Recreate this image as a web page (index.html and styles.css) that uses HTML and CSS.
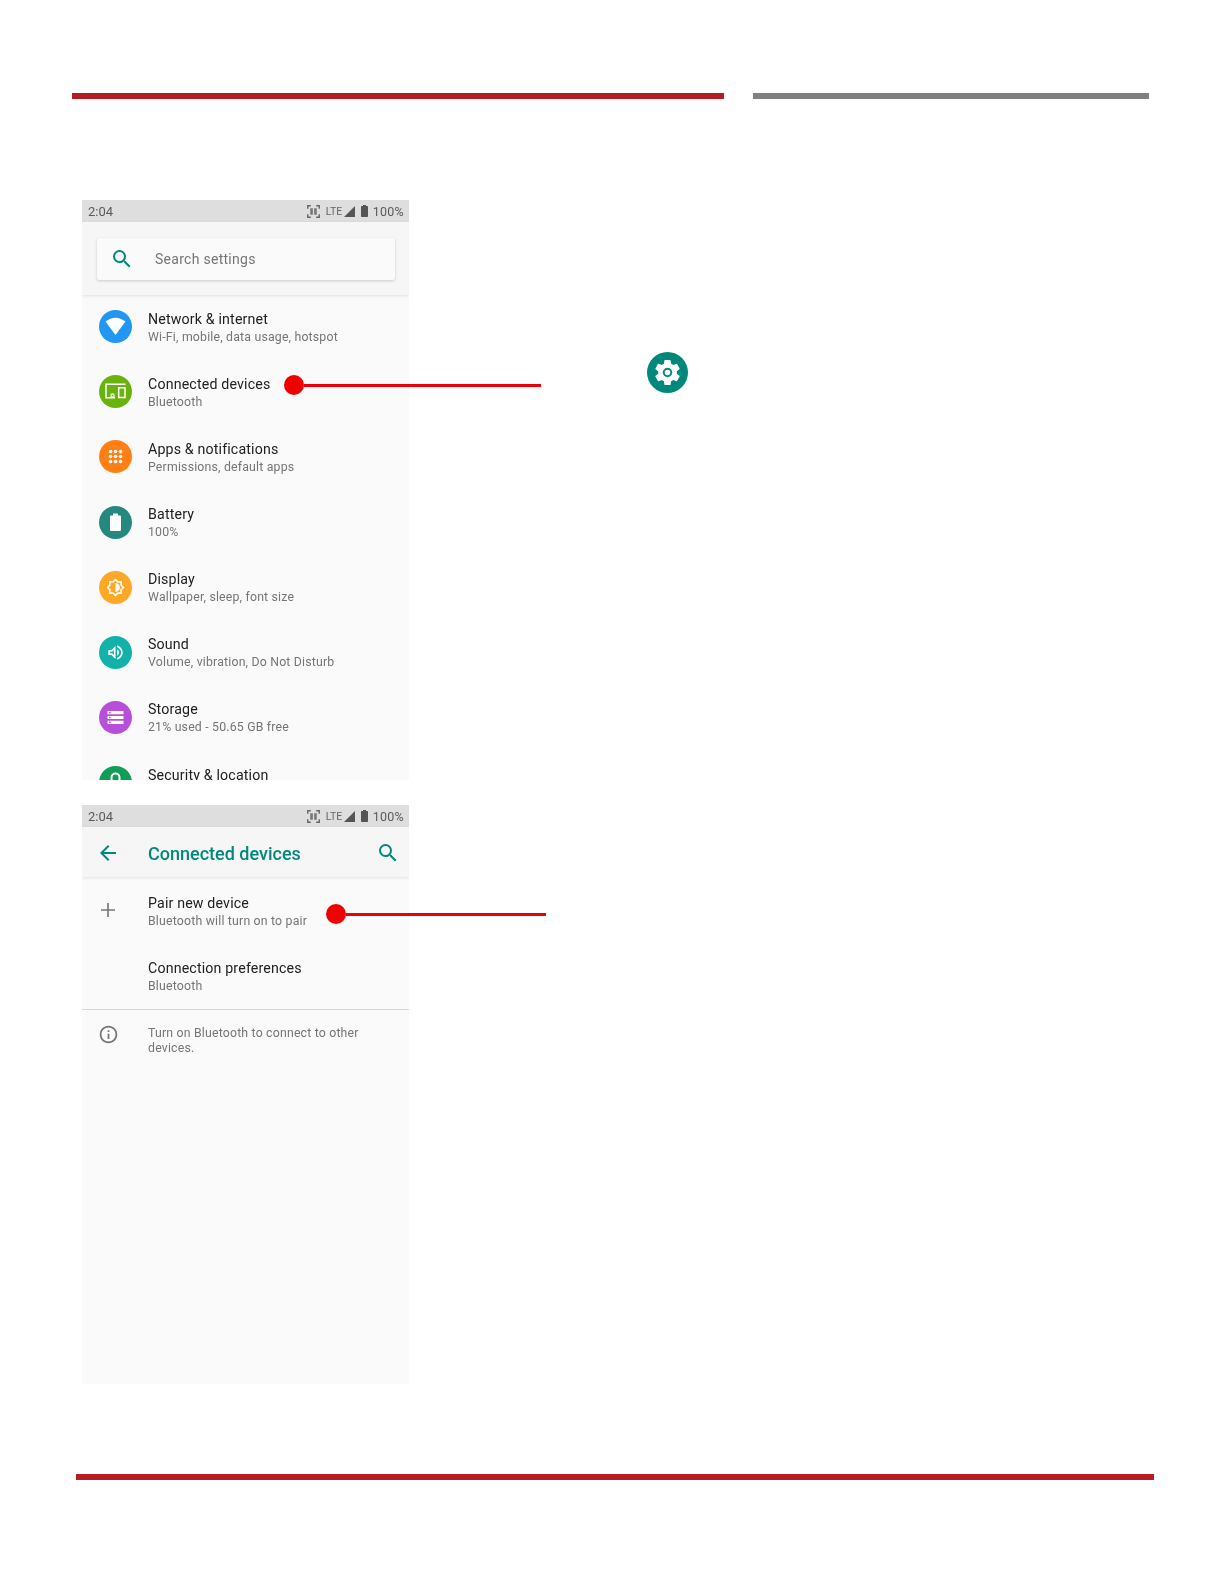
FILE: index.html
```html
<!DOCTYPE html>
<html lang="en">
<head>
<meta charset="utf-8">
<title>Connected devices</title>
<link rel="stylesheet" href="styles.css">
</head>
<body>
<div class="page">
  <div class="top-rules"><div class="rule-red"></div><div class="rule-gray"></div></div>

  <section class="shot-row first">
    <div class="screen main-screen">
      <div class="status">
        <span class="time">2:04</span>
        <span class="status-right">
          <svg class="st-scan" viewBox="0 0 12 12"><path d="M.7 3.5V.7h2.8M8.5.7h2.8v2.8M.7 8.5v2.8h2.8M8.5 11.3h2.8V8.5" fill="none" stroke="#666" stroke-width="1.3"/><rect x="3" y="3" width="2.4" height="6" fill="#777"/><rect x="6.6" y="3" width="2.4" height="6" fill="#777"/></svg>
          <span class="lte">LTE</span>
          <svg class="st-signal" viewBox="0 0 11 11"><path d="M11 0v11H0z" fill="#555"/></svg>
          <svg class="st-batt" viewBox="0 0 7 12"><path d="M2 0h3v1h1.300a.7.7 0 0 1 .7.7v9.600a.7.7 0 0 1-.7.7H.7a.7.7 0 0 1-.7-.7V1.700A.7.7 0 0 1 .7 1H2z" fill="#555"/></svg>
          <span class="pct">100%</span>
        </span>
      </div>
      <div class="search-head">
        <div class="search-card">
          <svg class="search-ic" viewBox="0 0 24 24"><path d="M15.500 14h-.79l-.28-.27A6.470 6.470 0 0 0 16 9.500 6.500 6.500 0 1 0 9.500 16c1.610 0 3.090-.59 4.230-1.570l.27.28v.79l5 4.990L20.490 19l-4.990-5zm-6 0C7.010 14 5 11.990 5 9.500S7.010 5 9.500 5 14 7.010 14 9.500 11.990 14 9.500 14z"/></svg>
          <span class="search-text">Search settings</span>
        </div>
      </div>
      <div class="list">
        <div class="row">
          <span class="ic-slot"><svg class="ic" viewBox="0 0 33 33"><circle cx="16.500" cy="16.500" r="16.500" fill="#2196f3"/><path d="M6.500 11.500Q16.500 3.800 26.500 11.500L16.500 25z" fill="#fff"/></svg></span>
          <span class="txt"><span class="t">Network &amp; internet</span><span class="s">Wi-Fi, mobile, data usage, hotspot</span></span>
        </div>
        <div class="row">
          <span class="ic-slot"><svg class="ic" viewBox="0 0 33 33"><circle cx="16.500" cy="16.500" r="16.500" fill="#6ab30f"/><path d="M26.500 9.300H7v13.400h9" fill="none" stroke="#fff" stroke-width="1.500"/><rect x="19.700" y="12.800" width="6.300" height="9.700" fill="none" stroke="#fff" stroke-width="1.500"/><circle cx="13.500" cy="20.500" r="1.600" fill="none" stroke="#fff" stroke-width="1.200"/></svg></span>
          <span class="txt"><span class="t">Connected devices</span><span class="s">Bluetooth</span></span>
        </div>
        <div class="row">
          <span class="ic-slot"><svg class="ic" viewBox="0 0 33 33"><circle cx="16.500" cy="16.500" r="16.500" fill="#ff7f17"/><g fill="#fff"><circle cx="11.500" cy="11.500" r="1.800"/><circle cx="16.500" cy="11.500" r="1.800"/><circle cx="21.500" cy="11.500" r="1.800"/><circle cx="11.500" cy="16.500" r="1.800"/><circle cx="16.500" cy="16.500" r="1.800"/><circle cx="21.500" cy="16.500" r="1.800"/><circle cx="11.500" cy="21.500" r="1.800"/><circle cx="16.500" cy="21.500" r="1.800"/><circle cx="21.500" cy="21.500" r="1.800"/></g></svg></span>
          <span class="txt"><span class="t">Apps &amp; notifications</span><span class="s">Permissions, default apps</span></span>
        </div>
        <div class="row">
          <span class="ic-slot"><svg class="ic" viewBox="0 0 33 33"><circle cx="16.500" cy="16.500" r="16.500" fill="#26897f"/><path d="M14 7.500h5v2h2a1 1 0 0 1 1 1V24a1 1 0 0 1-1 1h-9a1 1 0 0 1-1-1V10.500a1 1 0 0 1 1-1h2z" fill="#fff"/></svg></span>
          <span class="txt"><span class="t">Battery</span><span class="s">100%</span></span>
        </div>
        <div class="row">
          <span class="ic-slot"><svg class="ic" viewBox="0 0 33 33"><circle cx="16.500" cy="16.500" r="16.500" fill="#ffa726"/><path transform="translate(6.900 6.900) scale(.8)" fill="#fff" fill-rule="evenodd" d="M20 15.310L23.310 12 20 8.690V4h-4.690L12 .690 8.690 4H4v4.690L.690 12 4 15.310V20h4.690L12 23.310 15.310 20H20v-4.690zM18 14.480V18h-3.520L12 20.480 9.520 18H6v-3.520L3.520 12 6 9.520V6h3.520L12 3.520 14.480 6H18v3.520L20.480 12 18 14.480zM12 6.500v11c3 0 5.500-2.500 5.500-5.500S15 6.500 12 6.500z"/></svg></span>
          <span class="txt"><span class="t">Display</span><span class="s">Wallpaper, sleep, font size</span></span>
        </div>
        <div class="row">
          <span class="ic-slot"><svg class="ic" viewBox="0 0 33 33"><circle cx="16.500" cy="16.500" r="16.500" fill="#12b2aa"/><path transform="translate(6.900 6.900) scale(.8)" fill="#fff" d="M3 9v6h4l5 5V4L7 9H3zm7-.170v6.340L7.830 13H5v-2h2.830L10 8.830zM16.500 12c0-1.770-1.020-3.290-2.500-4.030v8.050c1.480-.730 2.500-2.250 2.500-4.020zM14 3.230v2.060c2.890.860 5 3.540 5 6.710s-2.110 5.850-5 6.710v2.060c4.010-.910 7-4.490 7-8.770 0-4.280-2.990-7.860-7-8.770z"/></svg></span>
          <span class="txt"><span class="t">Sound</span><span class="s">Volume, vibration, Do Not Disturb</span></span>
        </div>
        <div class="row">
          <span class="ic-slot"><svg class="ic" viewBox="0 0 33 33"><circle cx="16.500" cy="16.500" r="16.500" fill="#b84fdb"/><path transform="translate(6.900 6.900) scale(.8)" fill="#fff" fill-rule="evenodd" d="M2 20h20v-4H2v4zm2-3h2v2H4v-2zM2 4v4h20V4H2zm4 3H4V5h2v2zm-4 7h20v-4H2v4zm2-3h2v2H4v-2z"/></svg></span>
          <span class="txt"><span class="t">Storage</span><span class="s">21% used - 50.65 GB free</span></span>
        </div>
        <div class="row">
          <span class="ic-slot"><svg class="ic" viewBox="0 0 33 33"><circle cx="16.500" cy="16.500" r="16.500" fill="#0f9d58"/><path d="M12.500 14v-2.500a4 4 0 0 1 8 0V14" fill="none" stroke="#fff" stroke-width="2"/><rect x="10" y="14" width="13" height="11" fill="#fff"/></svg></span>
          <span class="txt"><span class="t">Security &amp; location</span><span class="s"></span></span>
        </div>
      </div>
    </div>
    <svg class="gear" viewBox="0 0 41 41"><circle cx="20.500" cy="20.500" r="20.500" fill="#00897b"/><g transform="translate(5.500 5.500) scale(1.250)"><path fill="#fff" d="M19.430 12.980c.040-.320.070-.640.070-.980s-.030-.660-.070-.980l2.110-1.650c.190-.150.240-.420.120-.640l-2-3.460c-.120-.220-.390-.300-.610-.220l-2.490 1c-.520-.400-1.080-.730-1.690-.980l-.380-2.650C14.460 2.180 14.250 2 14 2h-4c-.250 0-.460.180-.490.420l-.380 2.650c-.610.250-1.170.590-1.690.980l-2.490-1c-.230-.090-.490 0-.610.220l-2 3.460c-.130.220-.070.490.120.640l2.110 1.650c-.040.320-.070.650-.070.980s.030.660.070.980l-2.110 1.650c-.190.150-.240.420-.12.640l2 3.460c.120.220.390.300.610.220l2.490-1c.520.400 1.080.730 1.690.980l.380 2.650c.030.240.240.420.490.420h4c.250 0 .460-.18.490-.42l.380-2.650c.610-.250 1.170-.590 1.690-.98l2.490 1c.230.090.490 0 .610-.220l2-3.460c.120-.220.070-.490-.120-.640l-2.110-1.650z"/><circle cx="12" cy="12" r="3" fill="#fff" stroke="#00897b" stroke-width="1.600"/></g></svg>
    <div class="callout callout-a"><span class="dot"></span><span class="lead"></span></div>
  </section>

  <section class="shot-row second">
    <div class="screen sub-screen">
      <div class="status">
        <span class="time">2:04</span>
        <span class="status-right">
          <svg class="st-scan" viewBox="0 0 12 12"><path d="M.7 3.5V.7h2.8M8.5.7h2.8v2.8M.7 8.5v2.8h2.8M8.5 11.3h2.8V8.5" fill="none" stroke="#666" stroke-width="1.3"/><rect x="3" y="3" width="2.4" height="6" fill="#777"/><rect x="6.6" y="3" width="2.4" height="6" fill="#777"/></svg>
          <span class="lte">LTE</span>
          <svg class="st-signal" viewBox="0 0 11 11"><path d="M11 0v11H0z" fill="#555"/></svg>
          <svg class="st-batt" viewBox="0 0 7 12"><path d="M2 0h3v1h1.300a.7.7 0 0 1 .7.7v9.600a.7.7 0 0 1-.7.7H.7a.7.7 0 0 1-.7-.7V1.700A.7.7 0 0 1 .7 1H2z" fill="#555"/></svg>
          <span class="pct">100%</span>
        </span>
      </div>
      <div class="app-bar">
        <span class="bar-slot"><svg class="bar-ic" viewBox="0 0 24 24"><path d="M20 11H7.830l5.590-5.590L12 4l-8 8 8 8 1.410-1.410L7.830 13H20v-2z"/></svg></span>
        <span class="bar-title">Connected devices</span>
        <svg class="bar-ic bar-search" viewBox="0 0 24 24"><path d="M15.500 14h-.79l-.28-.27A6.470 6.470 0 0 0 16 9.500 6.500 6.500 0 1 0 9.500 16c1.610 0 3.090-.59 4.230-1.570l.27.28v.79l5 4.990L20.490 19l-4.990-5zm-6 0C7.010 14 5 11.990 5 9.500S7.010 5 9.500 5 14 7.010 14 9.500 11.990 14 9.500 14z"/></svg>
      </div>
      <div class="sub-list">
        <div class="row">
          <span class="ic-slot center"><svg class="plus" viewBox="0 0 24 24"><path d="M19 12.800h-6.200V19h-1.600v-6.200H5v-1.600h6.200V5h1.600v6.200H19v1.600z"/></svg></span>
          <span class="txt"><span class="t">Pair new device</span><span class="s">Bluetooth will turn on to pair</span></span>
        </div>
        <div class="row">
          <span class="ic-slot"></span>
          <span class="txt"><span class="t">Connection preferences</span><span class="s">Bluetooth</span></span>
        </div>
      </div>
      <div class="info">
        <span class="ic-slot center"><svg class="info-ic" viewBox="0 0 24 24"><path d="M11 7h2v2h-2zm0 4h2v6h-2zm1-9C6.480 2 2 6.480 2 12s4.480 10 10 10 10-4.480 10-10S17.520 2 12 2zm0 18c-4.410 0-8-3.590-8-8s3.590-8 8-8 8 3.590 8 8-3.590 8-8 8z"/></svg></span>
        <p class="info-text">Turn on Bluetooth to connect to other devices.</p>
      </div>
    </div>
    <div class="callout callout-b"><span class="dot"></span><span class="lead"></span></div>
  </section>

  <div class="bottom-rule"></div>
</div>
</body>
</html>
```
FILE: styles.css
```css
* { box-sizing: border-box; }
html, body { margin: 0; padding: 0; background: #fff; }
body { font-family: Roboto, "Liberation Sans", sans-serif; }
.page { width: 1224px; height: 1584px; padding-top: 93px; overflow: hidden; }

.top-rules { display: flex; gap: 29px; margin-left: 72px; }
.rule-red { width: 652px; height: 6px; background: #b71c24; }
.rule-gray { width: 396px; height: 6px; background: #808080; }
.bottom-rule { width: 1078px; height: 6px; margin: 90px 0 0 76px; background: #b71c24; }

.shot-row { position: relative; display: flex; align-items: flex-start; margin-left: 82px; }
.shot-row.first { margin-top: 101px; }
.shot-row.second { margin-top: 25px; }

.screen { width: 327px; background: #fafafa; overflow: hidden; filter: blur(.3px); }
.main-screen { height: 580px; }
.sub-screen { height: 579px; }

.status { display: flex; align-items: center; justify-content: space-between; height: 22px; padding: 0 5px 0 6px; background: #dedede; color: #5a5a5a; }
.time { font-size: 13px; }
.status-right { display: flex; align-items: center; }
.st-scan { width: 13px; height: 13px; }
.lte { margin-left: 6px; font-size: 10.500px; width: 15px; color: #666; }
.st-signal { width: 11px; height: 11px; margin-left: 3px; }
.st-batt { width: 7px; height: 12px; margin-left: 6px; }
.pct { margin-left: 5px; font-size: 12.500px; letter-spacing: .25px; }

.search-head { height: 73px; padding: 16px 14px 0 15px; background: #f6f6f6; box-shadow: 0 1px 3px rgba(0,0,0,.1); position: relative; }
.search-card { display: flex; align-items: center; height: 42px; background: #fafafa; border-radius: 2px; box-shadow: 0 1px 3px rgba(0,0,0,.18); }
.search-ic { width: 24px; height: 24px; margin-left: 13px; fill: #00897b; }
.search-text { margin-left: 21px; font-size: 14px; letter-spacing: .28px; color: #757575; }

.list { padding-top: .600px; }
.row { display: flex; align-items: center; height: 65.100px; }
.ic-slot { flex: 0 0 66px; padding-left: 16.500px; display: flex; }
.ic-slot.center { padding-left: 0; padding-right: 14px; justify-content: center; }
.ic { width: 33px; height: 33px; display: block; margin-bottom: 2.700px; }
.txt { display: flex; flex-direction: column; }
.t { font-size: 14.200px; line-height: 19px; color: #212121; letter-spacing: .16px; }
.s { font-size: 12.300px; line-height: 17.500px; min-height: 17.500px; color: #757575; letter-spacing: .19px; }

.gear { width: 41px; height: 41px; margin: 152px 0 0 238px; flex: none; }

.callout { position: absolute; display: flex; align-items: center; height: 20px; }
.dot { width: 20px; height: 20px; border-radius: 50%; background: #f00000; flex: none; }
.lead { height: 3px; background: #e8000a; flex: none; }
.callout-a { left: 202px; top: 175px; }
.callout-a .lead { width: 237px; }
.callout-b { left: 244px; top: 99px; }
.callout-b .lead { width: 200px; }

.app-bar { display: flex; align-items: center; height: 50px; padding-top: 1px; background: #f6f6f6; box-shadow: 0 1px 3px rgba(0,0,0,.1); position: relative; }
.bar-slot { flex: 0 0 66px; padding-right: 14px; display: flex; justify-content: center; }
.bar-ic { width: 24px; height: 24px; fill: #00897b; }
.bar-title { flex: 1; padding-top: 2px; font-size: 18px; font-weight: 500; color: #00897b; }
.bar-search { margin-right: 9px; }

.sub-list { height: 133px; padding-top: 3px; border-bottom: 1px solid #d6d6d6; }
.plus { width: 24px; height: 24px; fill: #757575; margin-bottom: 5px; }
.info { display: flex; padding-top: 16px; }
.info-ic { width: 21px; height: 21px; fill: #757575; margin-top: -2px; }
.info-text { margin: 0; width: 240px; font-size: 12.300px; line-height: 15.300px; color: #757575; letter-spacing: .19px; }
```
